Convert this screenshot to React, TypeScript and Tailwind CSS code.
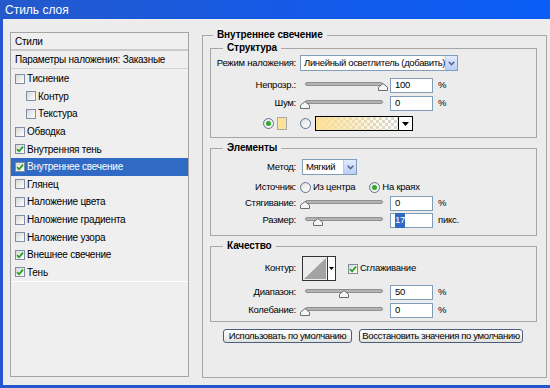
import React from "react";

type Item = { label: string; on?: boolean; indent?: boolean; active?: boolean };

const items: Item[] = [
  { label: "Тиснение" },
  { label: "Контур", indent: true },
  { label: "Текстура", indent: true },
  { label: "Обводка" },
  { label: "Внутренняя тень", on: true },
  { label: "Внутреннее свечение", on: true, active: true },
  { label: "Глянец" },
  { label: "Наложение цвета" },
  { label: "Наложение градиента" },
  { label: "Наложение узора" },
  { label: "Внешнее свечение", on: true },
  { label: "Тень", on: true },
];

function Check({ on }: { on?: boolean }) {
  return (
    <span className="flex h-[10px] w-[10px] shrink-0 items-center justify-center border border-[#7d8ea5] bg-gradient-to-br from-[#d8d8d4] to-white">
      {on && (
        <svg width="8" height="8" viewBox="0 0 8 8">
          <path d="M1 4.2 L3.1 6.3 L7 1.6" fill="none" stroke="#1f9e1f" strokeWidth="1.7" />
        </svg>
      )}
    </span>
  );
}

function Radio({ on }: { on?: boolean }) {
  return (
    <span className="flex h-[11px] w-[11px] shrink-0 items-center justify-center rounded-full border border-[#5b7396] bg-gradient-to-br from-[#e0e0dc] to-white">
      {on && <span className="h-[5px] w-[5px] rounded-full bg-[#2eaa2e]" />}
    </span>
  );
}

function Slider({ value }: { value: number }) {
  return (
    <div className="relative h-[15px] w-[88px] shrink-0">
      <div className="absolute left-[5px] right-[5px] top-[4px] h-[4px] rounded-full border border-[#8f8f8f] bg-[#b4b4b4]" />
      <svg className="absolute top-[5px]" style={{ left: value * 0.78 }} width="10" height="8" viewBox="0 0 10 8">
        <path d="M0.5 7.5 V4.2 L5 0.5 L9.5 4.2 V7.5 Z" fill="#f6f6f6" stroke="#6d6d6d" />
      </svg>
    </div>
  );
}

function Field({ children }: { children: React.ReactNode }) {
  return (
    <div className="ml-[2px] flex h-[15px] w-[43px] shrink-0 items-center border border-[#7f9db9] bg-white pl-[4px]">
      {children}
    </div>
  );
}

function Row({ label, className, children }: { label: string; className: string; children: React.ReactNode }) {
  return (
    <div className={"flex items-center " + className}>
      <span className="w-[85px] shrink-0 text-right whitespace-nowrap">{label}</span>
      <div className="ml-[4px] flex items-center">{children}</div>
    </div>
  );
}

function SliderRow({ label, value, field, unit, className }: { label: string; value: number; field: React.ReactNode; unit: string; className: string }) {
  return (
    <Row label={label} className={className}>
      <Slider value={value} />
      <Field>{field}</Field>
      <span className="ml-[5px]">{unit}</span>
    </Row>
  );
}

function Select({ text, className }: { text: string; className: string }) {
  return (
    <div className={"flex h-[16px] items-center border border-[#7f9db9] bg-white " + className}>
      <span className="flex-1 pl-[3px] tracking-[-0.35px] whitespace-nowrap">{text}</span>
      <span className="flex h-full w-[13px] items-center justify-center border-l border-[#b4c8f0] bg-gradient-to-b from-[#e3ebfd] to-[#b9cdf8]">
        <svg width="7" height="5" viewBox="0 0 7 5">
          <path d="M0.8 0.8 L3.5 3.8 L6.2 0.8" fill="none" stroke="#4d6185" strokeWidth="1.4" />
        </svg>
      </span>
    </div>
  );
}

function Group({ title, className, children }: { title: string; className: string; children: React.ReactNode }) {
  return (
    <fieldset className={"border border-[#a6a6a6] " + className}>
      <legend className="ml-[12px] px-[4px] text-[10px] font-bold leading-[12px] tracking-[-0.1px]">{title}</legend>
      {children}
    </fieldset>
  );
}

function StyleList() {
  return (
    <div className="mt-[3px] mb-[1px] flex w-[179px] shrink-0 flex-col border border-[#a4a4a4] bg-[#efefef] text-[10px]">
      <div className="flex h-[18px] items-center border-b-2 border-[#c9c9c9] px-[4px]">Стили</div>
      <div className="flex h-[18px] items-center border-b border-[#d2d2d2] px-[4px]">Параметры наложения: Заказные</div>
      <div className="flex flex-col border-b border-white pt-[1px]">
        {items.map((it) => (
          <div
            key={it.label}
            className={
              "flex h-[17.6px] items-center gap-[2px] " +
              (it.indent ? "pl-[15px] " : "pl-[4px] ") +
              (it.active ? "bg-[#316ac5] text-white" : "")
            }
          >
            <Check on={it.on} />
            <span className="whitespace-nowrap">{it.label}</span>
          </div>
        ))}
      </div>
    </div>
  );
}

function Panel() {
  return (
    <fieldset className="w-[345px] shrink-0 border border-[#a6a6a6] text-[9.5px]">
      <legend className="ml-[10px] px-[4px] text-[10px] font-bold leading-[12px] tracking-[-0.1px]">Внутреннее свечение</legend>
      <div className="flex flex-col pl-[7px] pr-[9px]">
        <Group title="Структура" className="mt-[1px] pb-[6px]">
          <Row label="Режим наложения:" className="mt-[1px] h-[16px]">
            <Select text="Линейный осветлитель (добавить)" className="w-[158px]" />
          </Row>
          <SliderRow label="Непрозр.:" value={100} field="100" unit="%" className="mt-[7px] h-[15px]" />
          <SliderRow label="Шум:" value={0} field="0" unit="%" className="mt-[3px] h-[15px]" />
          <div className="mt-[5px] flex h-[15px] items-center pl-[52px]">
            <Radio on />
            <span className="ml-[3px] h-[13px] w-[10px] border border-[#a8a8a8] bg-[#fde29c]" />
            <span className="ml-[13px]">
              <Radio />
            </span>
            <div className="ml-[4px] h-[15px] w-[84px] border border-black bg-[image:repeating-conic-gradient(#d6d6d6_0_25%,#fff_0_50%)] bg-[length:6px_6px]">
              <div className="h-full w-full bg-gradient-to-r from-[#fde097] to-[#fde09700]" />
            </div>
            <div className="flex h-[15px] w-[14px] items-center justify-center border border-l-0 border-black bg-white">
              <svg width="7" height="4" viewBox="0 0 7 4">
                <path d="M0 0 H7 L3.5 4 Z" fill="#000" />
              </svg>
            </div>
          </div>
        </Group>

        <Group title="Элементы" className="mt-[4px] pb-[7px]">
          <Row label="Метод:" className="mt-[5px] h-[16px]">
            <Select text="Мягкий" className="ml-[2px] w-[55px]" />
          </Row>
          <Row label="Источник:" className="mt-[5px] h-[14px]">
            <Radio />
            <span className="ml-[2px]">Из центра</span>
            <span className="ml-[14px]">
              <Radio on />
            </span>
            <span className="ml-[2px]">На краях</span>
          </Row>
          <SliderRow label="Стягивание:" value={0} field="0" unit="%" className="mt-[2px] h-[15px]" />
          <SliderRow
            label="Размер:"
            value={17}
            field={<span className="bg-[#316ac5] text-white">17</span>}
            unit="пикс."
            className="mt-[2px] h-[15px]"
          />
        </Group>

        <Group title="Качество" className="mt-[4px] pb-[3px]">
          <Row label="Контур:" className="mt-[4px] h-[25px]">
            <div className="ml-[2px] flex h-[25px] border border-[#333]">
              <svg width="24" height="23" viewBox="0 0 24 23">
                <path d="M1 22 L23 1 L23 22 Z" fill="#a3a3a3" />
              </svg>
              <div className="flex w-[8px] items-center justify-center border-l border-[#333] bg-white">
                <svg width="5" height="3" viewBox="0 0 5 3">
                  <path d="M0 0 H5 L2.5 3 Z" fill="#000" />
                </svg>
              </div>
            </div>
            <span className="ml-[12px]">
              <Check on />
            </span>
            <span className="ml-[2px]">Сглаживание</span>
          </Row>
          <SliderRow label="Диапазон:" value={50} field="50" unit="%" className="mt-[4px] h-[15px]" />
          <SliderRow label="Колебание:" value={0} field="0" unit="%" className="mt-[3px] h-[15px]" />
        </Group>

        <div className="mt-[7px] flex gap-[7px] pl-[13px]">
          <button className="h-[14px] w-[129px] rounded-[3px] border border-[#4a5d80] bg-gradient-to-b from-white to-[#e2e2dc] leading-none tracking-[-0.35px] whitespace-nowrap">
            Использовать по умолчанию
          </button>
          <button className="h-[14px] w-[164px] rounded-[3px] border border-[#4a5d80] bg-gradient-to-b from-white to-[#e2e2dc] leading-none tracking-[-0.35px] whitespace-nowrap">
            Восстановить значения по умолчанию
          </button>
        </div>
      </div>
    </fieldset>
  );
}

export default function App() {
  return (
    <div className="flex h-[388px] w-[550px] flex-col overflow-hidden bg-[#2457cf] font-['Liberation_Sans',sans-serif] tracking-[-0.25px] text-black">
      <div className="flex h-[19px] shrink-0 items-center bg-gradient-to-r from-[#2459cb] via-[#155ae6] to-[#0a5df7] pl-[5px] text-[12px] tracking-normal text-white">
        Стиль слоя
      </div>
      <div className="ml-[3px] mb-[3px] flex flex-1 gap-[13px] bg-[#ececec] pt-[10px] pb-[7px] pl-[7px] pr-[3px]">
        <StyleList />
        <Panel />
      </div>
    </div>
  );
}
